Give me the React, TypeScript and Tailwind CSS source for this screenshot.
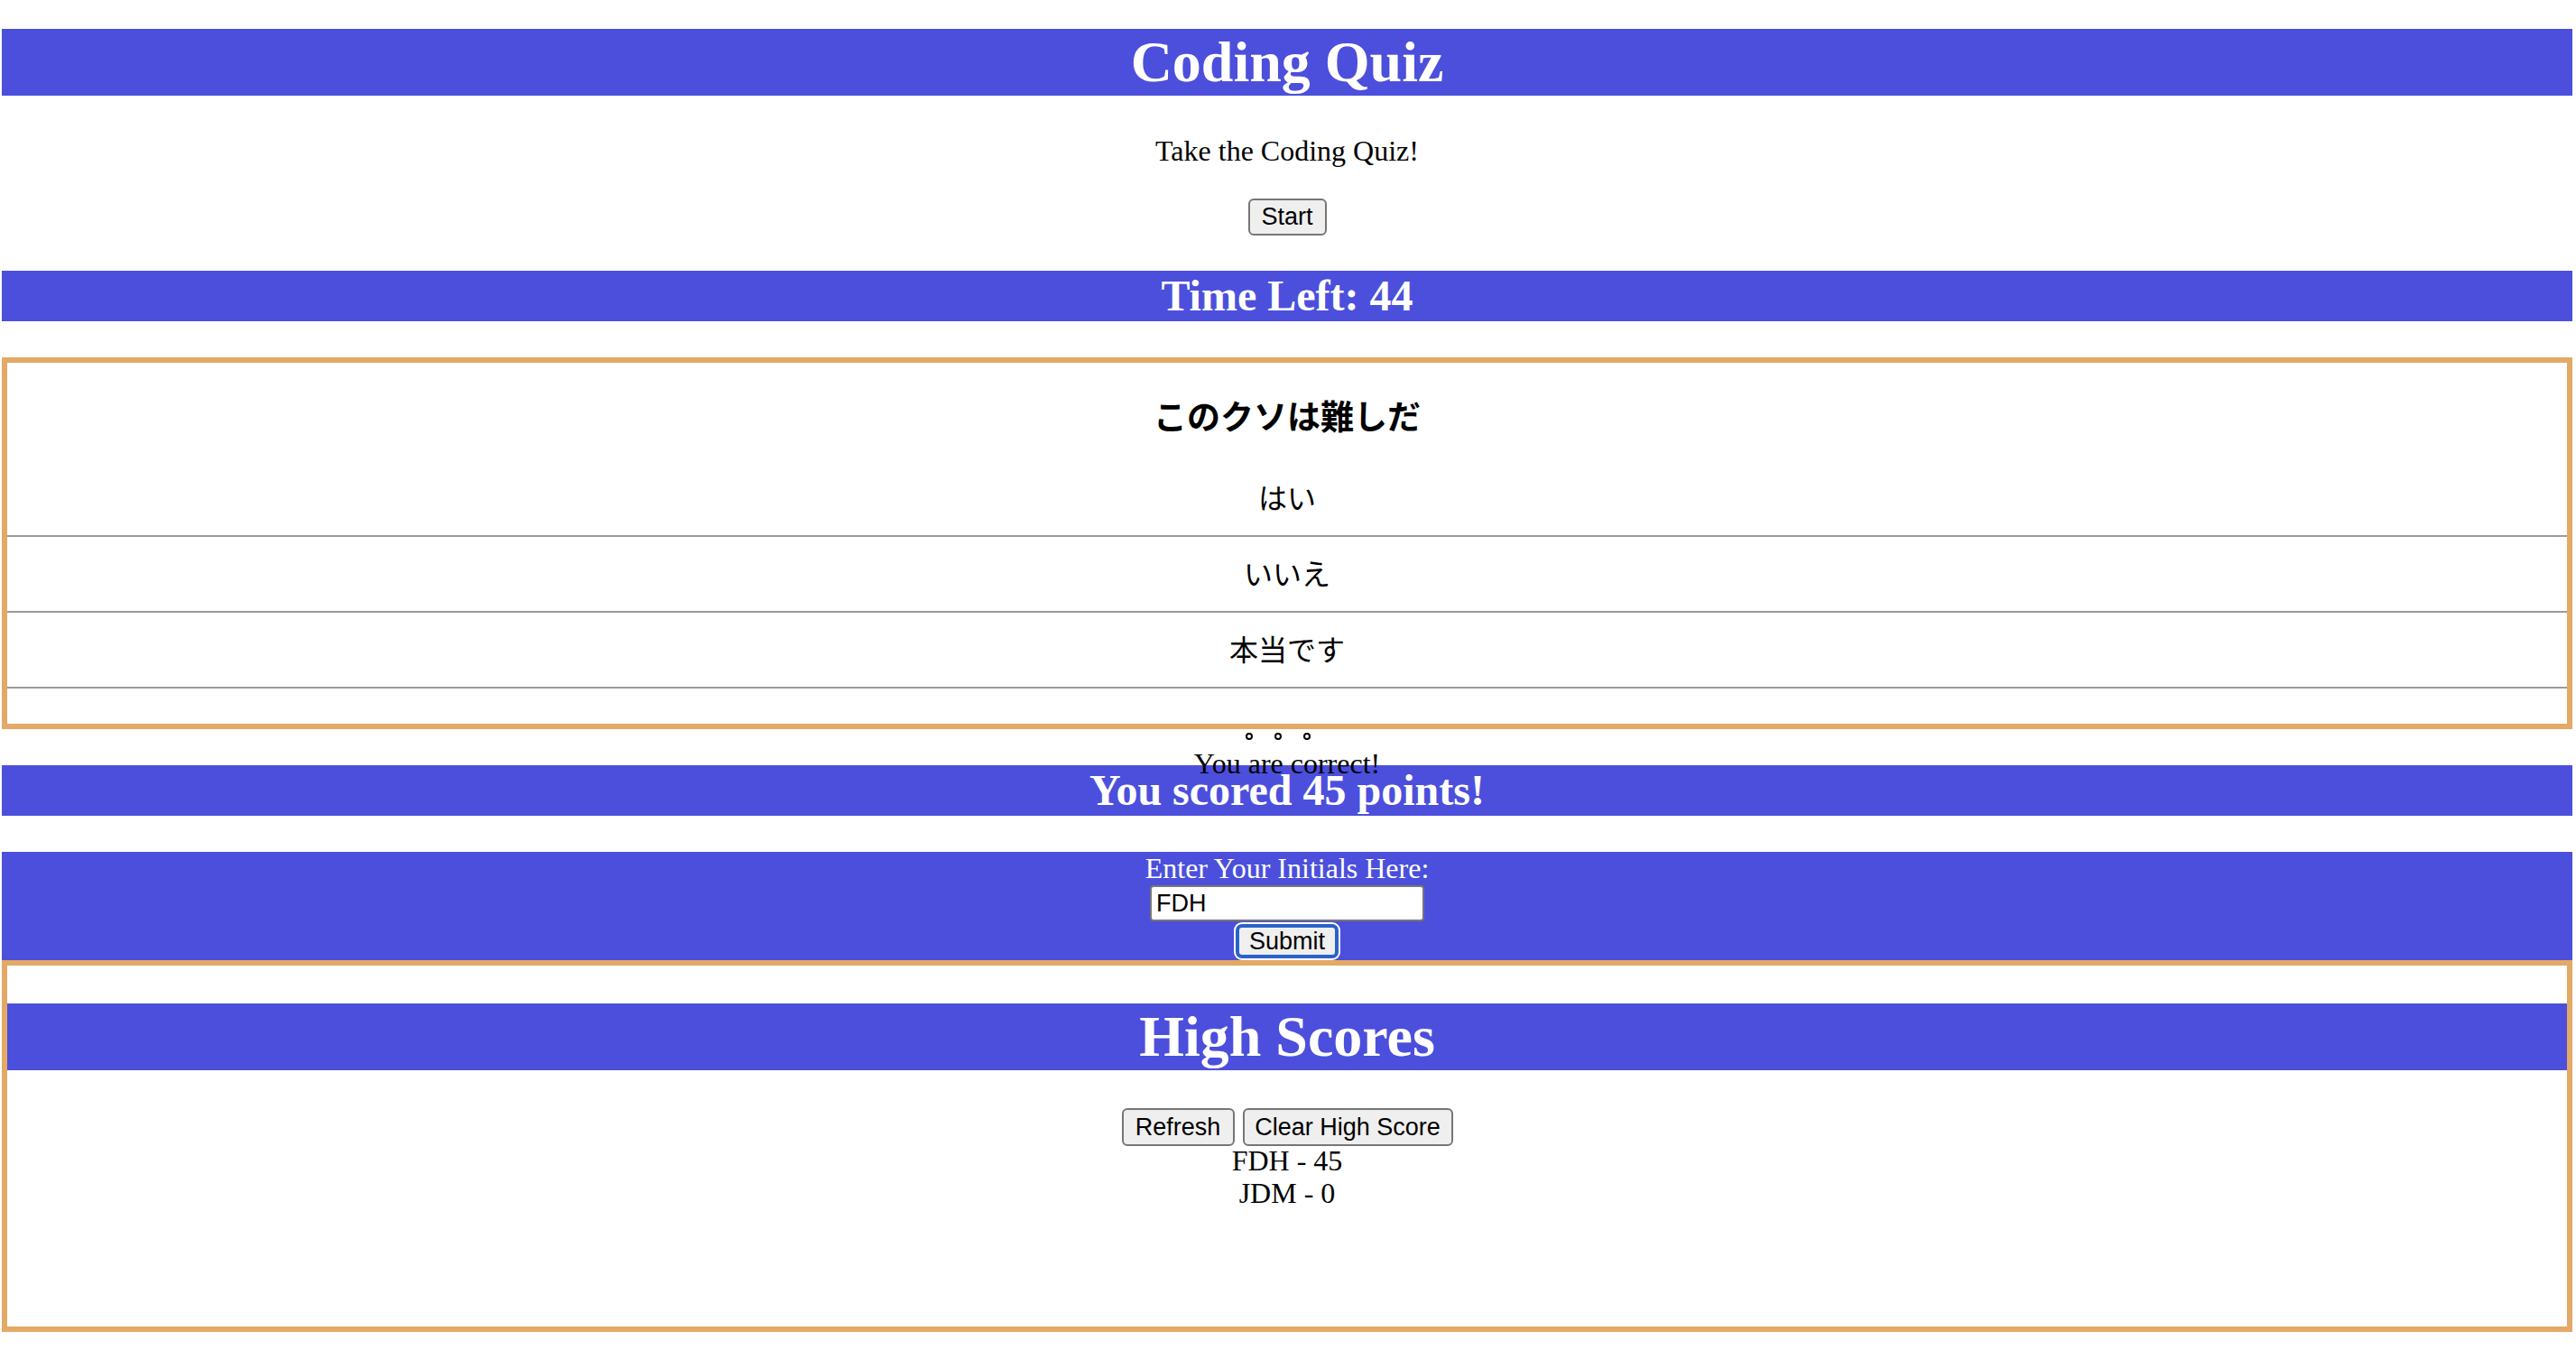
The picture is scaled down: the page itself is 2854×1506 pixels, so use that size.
import React from 'react';

const serif = 'font-["Liberation_Serif","Noto_Sans_CJK_JP",serif]';
const sans = 'font-["Liberation_Sans",Arial,sans-serif]';

function Banner({ children, big }: { children: React.ReactNode; big?: boolean }) {
  return (
    <h1
      className={`bg-[#4c4fdc] text-center font-bold text-white ${
        big ? 'h-[74px] text-[64px] leading-[74px]' : 'h-[56px] text-[48px] leading-[56px]'
      }`}
    >
      {children}
    </h1>
  );
}

function OptionRow({ label }: { label: string }) {
  return (
    <div className="border-b-2 border-[#9a9a9a] pt-[24px] pb-[21px] text-center text-[32px] leading-[37px]">
      {label}
    </div>
  );
}

export default function App() {
  const options = ['はい', 'いいえ', '本当です'];
  const scores = [
    { initials: 'FDH', score: 45 },
    { initials: 'JDM', score: 0 },
  ];

  return (
    <div className={`${serif} min-h-[1506px] bg-white pl-[2px] pr-[4px] pt-[32px] text-black`}>
      {/* Header */}
      <Banner big>Coding Quiz</Banner>

      <p className="mt-[43px] text-center text-[32px] leading-[37px]">Take the Coding Quiz!</p>

      <div className="mt-[34px] flex justify-center">
        <button
          className={`${sans} h-[41px] w-[87px] rounded-[6px] border-2 border-[#767676] bg-[#efefef] text-[27px] leading-none text-black`}
        >
          Start
        </button>
      </div>

      <div className="mt-[39px]">
        <Banner>Time Left: 44</Banner>
      </div>

      {/* Question card */}
      <div className="mt-[40px] h-[412px] border-[6px] border-[#e3a966]">
        <h3 className="mt-[40px] text-center text-[37px] font-bold leading-[44px]">このクソは難しだ</h3>
        <div className="mt-[25px]">
          {options.map((o) => (
            <OptionRow key={o} label={o} />
          ))}
        </div>
      </div>

      {/* Feedback */}
      <div className="flex h-[20px] justify-center gap-[24px] pt-[4px] pr-[20px]">
        {[0, 1, 2].map((i) => (
          <span key={i} className="h-[8px] w-[8px] rounded-full border-2 border-black" />
        ))}
      </div>
      <div className="h-[20px] text-center text-[32px] leading-[37px]">You are correct!</div>

      <Banner>You scored 45 points!</Banner>

      {/* Initials form */}
      <div className="mt-[40px] flex h-[120px] flex-col items-center bg-[#4c4fdc]">
        <label className="h-[37px] text-[32px] leading-[37px] text-white">Enter Your Initials Here:</label>
        <input
          defaultValue="FDH"
          className={`${sans} h-[40px] w-[304px] rounded-[4px] border-2 border-[#767676] bg-white px-[5px] text-[27px] text-black outline-none`}
        />
        <button
          className={`${sans} mt-[3px] h-[38px] w-[114px] rounded-[7px] border-[4px] border-[#2a62c9] bg-[#efefef] text-[27px] leading-none text-black shadow-[0_0_0_2px_#ffffff]`}
        >
          Submit
        </button>
      </div>

      {/* High scores */}
      <div className="h-[412px] border-[6px] border-[#e3a966]">
        <div className="mt-[42px]">
          <Banner big>High Scores</Banner>
        </div>
        <div className={`${sans} mt-[42px] flex h-[42px] justify-center gap-[9px]`}>
          <button className="h-[42px] w-[125px] rounded-[6px] border-2 border-[#767676] bg-[#efefef] text-[27px] leading-none text-black">
            Refresh
          </button>
          <button className="h-[42px] w-[233px] rounded-[6px] border-2 border-[#767676] bg-[#efefef] text-[27px] leading-none text-black">
            Clear High Score
          </button>
        </div>
        <div className="-mt-[2px] text-center text-[32px] leading-[36px]">
          {scores.map((s) => (
            <div key={s.initials}>
              {s.initials} - {s.score}
            </div>
          ))}
        </div>
      </div>
    </div>
  );
}
